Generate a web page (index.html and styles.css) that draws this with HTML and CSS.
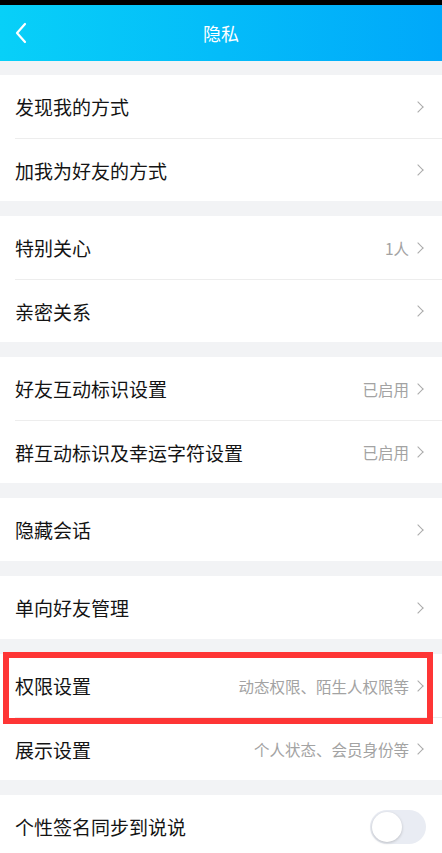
FILE: index.html
```html
<!DOCTYPE html>
<html lang="zh-CN">
<head>
  <meta charset="UTF-8" />
  <meta name="viewport" content="width=device-width, initial-scale=1.0"/>
  <title>隐私</title>
  <link rel="stylesheet" href="styles.css">
</head>
<body>

  <div class="status"></div>

  <header class="topbar">
    <svg class="back" width="14" height="22" viewBox="0 0 14 22"><path d="M11 2 L3 11 L11 20" fill="none" stroke="#fff" stroke-width="2.2" stroke-linecap="round" stroke-linejoin="round"/></svg>
    <h1>隐私</h1>
  </header>

  <main>
    <div class="group">
      <div class="row"><span class="label">发现我的方式</span><span class="arrow"></span></div>
      <div class="row"><span class="label">加我为好友的方式</span><span class="arrow"></span></div>
    </div>

    <div class="group">
      <div class="row"><span class="label">特别关心</span><span class="value">1人</span><span class="arrow"></span></div>
      <div class="row"><span class="label">亲密关系</span><span class="arrow"></span></div>
    </div>

    <div class="group">
      <div class="row"><span class="label">好友互动标识设置</span><span class="value">已启用</span><span class="arrow"></span></div>
      <div class="row"><span class="label">群互动标识及幸运字符设置</span><span class="value">已启用</span><span class="arrow"></span></div>
    </div>

    <div class="group">
      <div class="row"><span class="label">隐藏会话</span><span class="arrow"></span></div>
    </div>

    <div class="group">
      <div class="row"><span class="label">单向好友管理</span><span class="arrow"></span></div>
    </div>

    <div class="group marked">
      <div class="row"><span class="label">权限设置</span><span class="value">动态权限、陌生人权限等</span><span class="arrow"></span></div>
      <div class="row"><span class="label">展示设置</span><span class="value">个人状态、会员身份等</span><span class="arrow"></span></div>
      <div class="redbox"></div>
    </div>

    <div class="group">
      <div class="row"><span class="label">个性签名同步到说说</span><span class="switch"><span class="knob"></span></span></div>
    </div>
  </main>

</body>
</html>
```

FILE: styles.css
```css
*{margin:0;padding:0;box-sizing:border-box}
body{font-family:"Noto Sans CJK SC","Noto Sans",sans-serif;background:#f2f3f5;color:#141414;width:442px;height:853px;overflow:hidden}
.status{height:5px;background:#000}
.topbar{height:56px;display:flex;align-items:center;justify-content:center;position:relative;background:linear-gradient(90deg,#08d0f8,#00a8fa)}
.topbar h1{font-size:18px;font-weight:normal;color:#fff}
.back{position:absolute;left:14px;top:17px}
main{padding-top:14px}
.group{background:#fff;padding-left:15px;margin-bottom:15px}
.row{height:63px;display:flex;align-items:center;padding-right:18px}
.row + .row{border-top:1px solid #ededed}
.label{font-size:19px;flex:1}
.value{font-size:15.5px;color:#a3a3a3;margin-right:5px}
.arrow{width:8px;height:8px;border-top:1.6px solid #aaa;border-right:1.6px solid #aaa;transform:rotate(45deg);margin-right:2px}
.marked{position:relative}
.redbox{position:absolute;left:3px;top:-2px;width:430px;height:72px;border:6px solid #fe3535}
.switch{width:56px;height:34px;border-radius:17px;background:#e9ecf3;display:flex;align-items:center;padding-left:2px;margin-right:-2px}
.knob{width:30px;height:30px;border-radius:50%;background:#fff;box-shadow:0 1px 3px rgba(0,0,0,0.2)}
```
